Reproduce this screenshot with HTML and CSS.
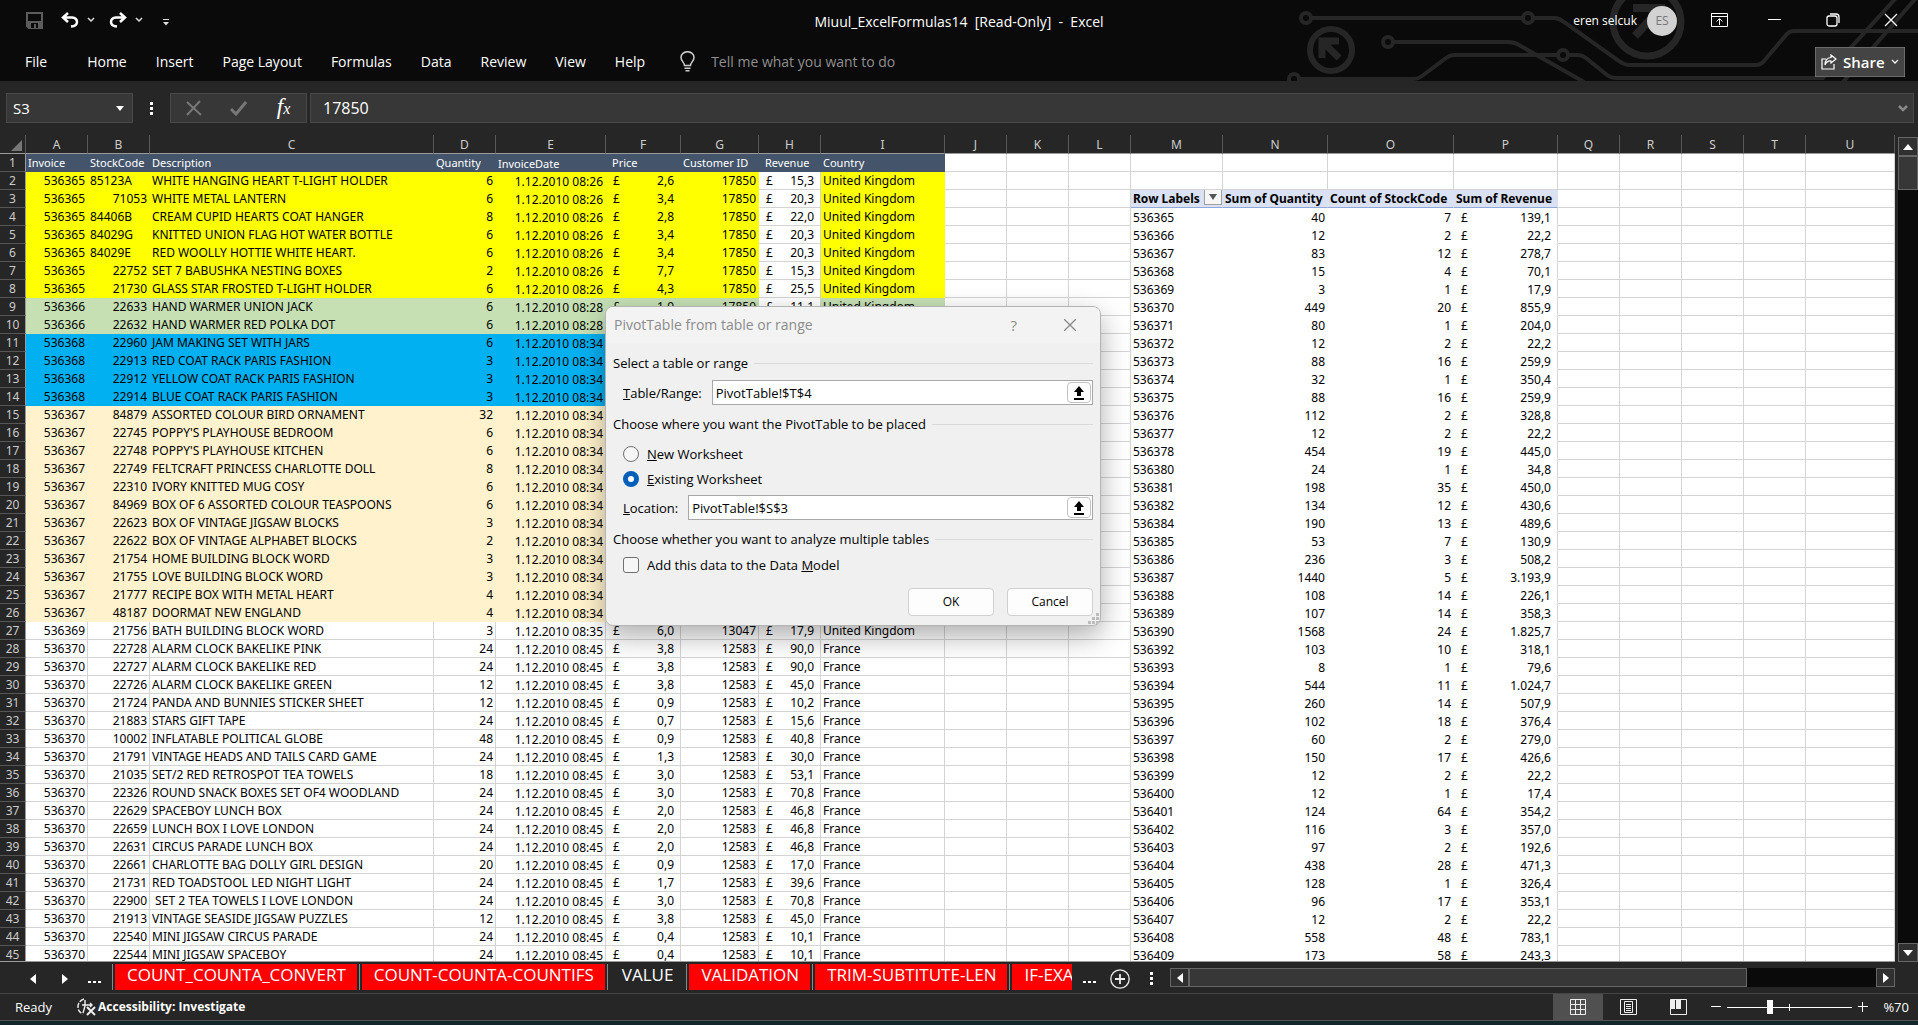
FILE: index.html
```html
<!DOCTYPE html>
<html lang="en">
<head>
<meta charset="utf-8">
<title>Miuul_ExcelFormulas14 - Excel</title>
<link rel="stylesheet" href="styles.css">
</head>
<body>
<div class="app">
  <header class="top">
    <svg class="circuit" viewBox="0 0 640 81" width="640" height="81" fill="none" stroke="#262626" stroke-width="4" aria-hidden="true">
      <circle cx="28" cy="18" r="5"/><path d="M33 18H245"/><circle cx="250" cy="18" r="5"/>
      <path d="M255 18H276Q281 18 286 22L341 61Q346 65 352 65H478Q483 65 486 61L508 35Q511 31 516 31H640"/>
      <circle cx="110" cy="42" r="5"/><path d="M115 42H230Q236 42 241 45L306 82"/>
      <circle cx="285" cy="55" r="5"/><path d="M280 55H176Q172 55 168 58L144 76Q140 79 136 79H21"/><circle cx="16" cy="79" r="5"/>
      <path d="M290 55H300Q304 55 308 58L329 75Q333 78 338 78H545L618 -2M565 82L638 -2"/>
      <circle cx="53" cy="50" r="21" stroke-width="6"/><path d="M61 41H44V58M45 42L61 58" stroke-width="7"/>
      <circle cx="369" cy="22" r="34" stroke-width="7"/><path d="M355 8H383V34M382 9L357 36" stroke-width="8"/>
    </svg>
    <div class="titlebar">
      <div class="quick">
        <button class="icon" aria-label="Save"><svg width="17" height="17" viewBox="0 0 17 17"><path d="M1 1H16V16H3L1 14Z" fill="none" stroke="#5c5c5c" stroke-width="2"/><path d="M2 9H15V15H2Z" fill="#5c5c5c"/><path d="M5 11H12V16H5Z" fill="#0a0a0a"/><path d="M8 12H10V16H8Z" fill="#5c5c5c"/></svg></button>
        <button class="icon undo" aria-label="Undo"><svg width="18" height="16" viewBox="0 0 18 16"><path d="M7 1L2 5.500L7 10M2.500 5.500H11Q16 6 16 10Q16 14 10 14.500" fill="none" stroke="#fff" stroke-width="2.500"/></svg></button>
        <button class="icon chev" aria-label="Undo list"><svg width="8" height="6" viewBox="0 0 8 6"><path d="M1 1L4 4L7 1" fill="none" stroke="#ddd" stroke-width="1.500"/></svg></button>
        <button class="icon redo" aria-label="Redo"><svg width="18" height="16" viewBox="0 0 18 16"><path d="M11 1L16 5.500L11 10M15.500 5.500H7Q2 6 2 10Q2 14 8 14.500" fill="none" stroke="#fff" stroke-width="2.500"/></svg></button>
        <button class="icon chev" aria-label="Redo list"><svg width="8" height="6" viewBox="0 0 8 6"><path d="M1 1L4 4L7 1" fill="none" stroke="#ddd" stroke-width="1.500"/></svg></button>
        <button class="icon custom" aria-label="Customize toolbar"><svg width="6" height="7" viewBox="0 0 6 7"><path d="M0 0H6V1H0ZM0 3H6L3 6.500Z" fill="#ddd"/></svg></button>
      </div>
      <h1 class="doc">Miuul_ExcelFormulas14&nbsp; [Read-Only]&nbsp; -&nbsp; Excel</h1>
      <div class="winctl">
        <span class="user">eren selcuk</span><span class="avatar">ES</span>
        <button class="icon w-ribbon" aria-label="Ribbon display"><svg width="17" height="14" viewBox="0 0 17 14" fill="none" stroke="#fff"><path d="M.5 .5H16.500V13.500H.5ZM.5 3.500H16.500M8.500 12V6M5.500 8.500L8.500 5.500L11.500 8.500"/></svg></button>
        <button class="icon" aria-label="Minimize"><svg width="14" height="14" viewBox="0 0 14 14"><path d="M0 6.500H13" stroke="#fff"/></svg></button>
        <button class="icon" aria-label="Restore"><svg width="14" height="14" viewBox="0 0 14 14" fill="none" stroke="#fff" stroke-width="1.300"><rect x="1" y="3" width="10" height="10" rx="2"/><path d="M4 1H10Q13 1 13 4V10"/></svg></button>
        <button class="icon" aria-label="Close"><svg width="14" height="14" viewBox="0 0 14 14"><path d="M1 1L13 13M13 1L1 13" stroke="#fff" stroke-width="1.300"/></svg></button>
      </div>
    </div>
    <div class="ribbon">
      <nav class="menu">
        <button class="file">File</button><button>Home</button><button>Insert</button><button>Page Layout</button><button>Formulas</button><button>Data</button><button>Review</button><button>View</button><button>Help</button>
      </nav>
      <label class="tell"><svg width="15" height="21" viewBox="0 0 15 21" fill="none" stroke="#ccc" stroke-width="1.500"><path d="M4.500 14.500C4.500 11.500 1 10 1 6.500A6.500 5.800 0 0 1 14 6.500C14 10 10.500 11.500 10.500 14.500ZM4.500 17.200H10.500M5.500 19.800H9.500"/></svg><input type="text" placeholder="Tell me what you want to do" aria-label="Tell me what you want to do"></label>
      <button class="share"><svg width="16" height="16" viewBox="0 0 16 16" fill="none" stroke="#fff" stroke-width="1.200"><path d="M5 5H1V15H13V10"/><path d="M10 1L15 5L10 9V7Q6 6.500 4 11Q4 4 10 3.500Z"/></svg>Share<svg width="8" height="6" viewBox="0 0 8 6"><path d="M1 1L4 4L7 1" fill="none" stroke="#fff" stroke-width="1.300"/></svg></button>
    </div>
  </header>

  <div class="formula">
    <div class="namebox"><input type="text" value="S3" aria-label="Name box"><svg width="8" height="5" viewBox="0 0 8 5"><path d="M0 0H8L4 5Z" fill="#fff"/></svg></div>
    <span class="dots"><i></i><i></i><i></i></span>
    <div class="fx">
      <button class="icon" aria-label="Cancel entry"><svg width="16" height="16" viewBox="0 0 16 16"><path d="M1 2L15 15M14 1L1 15" stroke="#777" stroke-width="2"/></svg></button>
      <button class="icon" aria-label="Enter"><svg width="17" height="15" viewBox="0 0 17 15"><path d="M1 8L6 13L16 1" fill="none" stroke="#777" stroke-width="3"/></svg></button>
      <button class="icon fn" aria-label="Insert function">f<small>x</small></button>
    </div>
    <div class="value"><input type="text" value="17850" aria-label="Formula bar"><svg width="10" height="7" viewBox="0 0 10 7"><path d="M1 1L5 5L9 1" fill="none" stroke="#888" stroke-width="2.500"/></svg></div>
  </div>

  <main class="work">
    <div class="sheet"><table id="grid"></table></div>
    <div class="vscroll"><button aria-label="Scroll up"><svg width="10" height="6" viewBox="0 0 10 6"><path d="M0 6L5 0L10 6Z" fill="#fff"/></svg></button><span class="vthumb"></span><button class="down" aria-label="Scroll down"><svg width="10" height="6" viewBox="0 0 10 6"><path d="M0 0L5 6L10 0Z" fill="#fff"/></svg></button></div>
  </main>

  <div class="tabs">
    <div class="tabnav">
      <button class="icon" aria-label="Previous sheet"><svg width="6" height="10" viewBox="0 0 6 10"><path d="M6 0V10L0 5Z" fill="#fff"/></svg></button>
      <button class="icon" aria-label="Next sheet"><svg width="6" height="10" viewBox="0 0 6 10"><path d="M0 0V10L6 5Z" fill="#fff"/></svg></button>
      <button class="icon more" aria-label="More sheets"><i></i><i></i><i></i></button>
    </div>
    <div class="tablist">
      <button class="red">COUNT_COUNTA_CONVERT</button><button class="red">COUNT-COUNTA-COUNTIFS</button><button>VALUE</button><button class="red">VALIDATION</button><button class="red">TRIM-SUBTITUTE-LEN</button><button class="red cut">IF-EXAMPLES</button>
    </div>
    <button class="icon more" aria-label="More sheets"><i></i><i></i><i></i></button>
    <button class="icon add" aria-label="New sheet"><svg width="20" height="20" viewBox="0 0 20 20" fill="none" stroke="#eee"><circle cx="10" cy="10" r="9.200" stroke-width="1.300"/><path d="M10 5V15M5 10H15" stroke-width="1.800"/></svg></button>
    <span class="dots"><i></i><i></i><i></i></span>
    <div class="hscroll"><button aria-label="Scroll left"><svg width="6" height="10" viewBox="0 0 6 10"><path d="M6 0V10L0 5Z" fill="#fff"/></svg></button><span class="hthumb"></span><span class="htrack"></span><button aria-label="Scroll right"><svg width="6" height="10" viewBox="0 0 6 10"><path d="M0 0V10L6 5Z" fill="#fff"/></svg></button></div>
  </div>

  <footer class="status">
    <span>Ready</span>
    <button class="acc-check"><svg width="19" height="18" viewBox="0 0 19 18" fill="none" stroke="#eee" stroke-width="1.400"><path d="M7 1Q1 3 1 9Q1 14 6 16" stroke-dasharray="5 1.500"/><path d="M8 2V8M5 7H15M13 5L15 7L13 9M8 8L6 15"/><path d="M10 9L18 17M18 9L10 17" stroke-width="2"/></svg>Accessibility: Investigate</button>
    <div class="views">
      <button class="on" aria-label="Normal view"><svg width="16" height="16" viewBox="0 0 16 16" fill="none" stroke="#eee"><path d="M.5 .5H15.500V15.500H.5ZM5.500 0V16M10.500 0V16M0 5.500H16M0 10.500H16"/></svg></button>
      <button aria-label="Page layout view"><svg width="17" height="16" viewBox="0 0 17 16" fill="none" stroke="#eee"><path d="M.5 .5H16.500V15.500H.5ZM4.500 2.500H12.500V13.500H4.500ZM6 5.500H11M6 7.500H11M6 9.500H11M6 11.500H11"/></svg></button>
      <button aria-label="Page break view"><svg width="17" height="16" viewBox="0 0 17 16" fill="none" stroke="#eee"><path d="M.5 .5H16.500V15.500H.5Z"/><path d="M1 1H5V10H1ZM6 1H11V10H6Z" fill="#eee" stroke="none"/></svg></button>
    </div>
    <button class="icon" aria-label="Zoom out"><svg width="10" height="10" viewBox="0 0 10 10"><path d="M0 4.500H10" stroke="#fff"/></svg></button>
    <span class="zoom"><input type="range" min="0" max="100" value="34" aria-label="Zoom"></span>
    <button class="icon" aria-label="Zoom in"><svg width="10" height="10" viewBox="0 0 10 10"><path d="M0 4.500H10M4.500 0V10" stroke="#fff"/></svg></button>
    <span class="pct">%70</span>
  </footer>
  <div class="strip"></div>
</div>

<section class="dialog" role="dialog" aria-labelledby="dlg">
  <header class="dtitle"><h2 id="dlg">PivotTable from table or range</h2><button class="icon help" aria-label="Help">?</button><button class="icon" aria-label="Close dialog"><svg width="12" height="12" viewBox="0 0 12 12"><path d="M0 0L12 12M12 0L0 12" stroke="#888" stroke-width="1.300"/></svg></button></header>
  <form class="dbody">
    <h3>Select a table or range</h3>
    <div class="field"><label for="rng"><u>T</u>able/Range:</label><span class="ref"><input id="rng" type="text" value="PivotTable!$T$4"><button type="button" aria-label="Pick range"><svg width="10" height="14" viewBox="0 0 10 14"><path d="M5 0L10 6H7V10H3V6H0ZM0 12H10V14H0Z"/></svg></button></span></div>
    <h3>Choose where you want the PivotTable to be placed</h3>
    <label class="opt first"><input type="radio" name="place"><span><u>N</u>ew Worksheet</span></label>
    <label class="opt"><input type="radio" name="place" checked><span><u>E</u>xisting Worksheet</span></label>
    <div class="field loc"><label for="loc"><u>L</u>ocation:</label><span class="ref"><input id="loc" type="text" value="PivotTable!$S$3"><button type="button" aria-label="Pick location"><svg width="10" height="14" viewBox="0 0 10 14"><path d="M5 0L10 6H7V10H3V6H0ZM0 12H10V14H0Z"/></svg></button></span></div>
    <h3>Choose whether you want to analyze multiple tables</h3>
    <label class="opt check"><input type="checkbox"><span>Add this data to the Data <u>M</u>odel</span></label>
    <div class="actions"><button type="button">OK</button><button type="button">Cancel</button></div>
  </form>
  <svg class="grip" width="11" height="11" viewBox="0 0 11 11" fill="#bdbdbd"><path d="M8 0H11V3H8ZM4 4H7V7H4ZM8 4H11V7H8ZM0 8H3V11H0ZM4 8H7V11H4ZM8 8H11V11H8Z"/></svg>
</section>
<script src="app.js"></script>
</body>
</html>
```
FILE: styles.css
```css
*{box-sizing:border-box}
body{margin:0;background:#262626;color:#fff;font:14px/20px "Open Sans","Noto Sans",sans-serif;overflow:hidden}
button,input{font:inherit;color:inherit;margin:0;padding:0;border:0;background:none;outline:0}
svg{display:block;flex:none}
h1,h2,h3{margin:0;font-weight:400}
.icon{display:flex;align-items:center;justify-content:center}
.app{display:flex;flex-direction:column;height:100vh}

.top{position:relative;background:#0a0a0a;height:81px;flex:none;display:flex;flex-direction:column}
.circuit{position:absolute;right:0;top:0}
.titlebar,.ribbon{position:relative;display:flex;align-items:center}
.titlebar{height:40px;display:grid;grid-template-columns:1fr auto 1fr}
.quick{display:flex;align-items:center;padding-left:26px}
.undo{margin-left:18px}
.redo{margin-left:14px}
.chev{margin-left:8px}
.custom{margin:4px 0 0 20px}
.doc{font-size:14px;padding-top:4px}
.winctl{display:flex;align-items:center;justify-content:flex-end;gap:44px;padding-right:20px}
.user{font-size:12px;padding-top:2px;margin-right:-34px}
.avatar{width:30px;height:30px;border-radius:50%;background:#d2d2d2;color:#777;font-size:12px;line-height:30px;text-align:center;margin:2px -10px 0 0}
.winctl .icon{height:14px;width:14px}
.winctl .w-ribbon{width:17px;margin-right:-4px}
.ribbon{height:41px;padding:2px 13px 0 11px}
.menu{display:flex}
.menu button{padding:0 15px 0 14px}
.menu .file{margin-right:11px}
.tell{display:flex;align-items:center;gap:16px;margin-left:20px;flex:1}
.tell input{width:240px}
.tell input::placeholder{color:#8f8f8f;opacity:1}
.share{display:flex;align-items:center;gap:6px;width:90px;height:30px;padding-left:5px;background:#444;border:1px solid #6a6a6a;font-weight:600;font-size:15px}

.formula{display:flex;height:54px;padding:12px 4px 12px 6px;flex:none;font-size:16px}
.namebox,.fx,.value{display:flex;align-items:center;background:#373737;border:1px solid #484848;height:30px}
.namebox{width:127px;padding:0 8px 0 6px}
.namebox input,.value input{flex:1;min-width:0}
.namebox input{font-size:15px}
.dots{display:flex;flex-direction:column;justify-content:center;gap:2px}
.dots i,.more i{width:3px;height:3px;background:#fff}
.formula .dots{width:37px;align-items:center}
.fx{width:137px;display:grid;grid-template-columns:1fr 1fr 1fr;justify-items:center}
.fn{font:italic 23px/26px "Liberation Serif",serif;-webkit-text-stroke:0;align-items:baseline}
.fn small{font-size:16px}
.value{flex:1;margin-left:3px;padding:0 5px 0 12px}

.work{flex:1;min-height:0;display:flex;gap:3px}
.sheet{flex:1;overflow:hidden;border-bottom:1px solid #9a9a9a}
table{table-layout:fixed;width:100%;border-collapse:separate;border-spacing:0;background:#fff;color:#000;font:12px/17px "Noto Sans",sans-serif}
th,td{height:18px;padding:0 2px;overflow:hidden;white-space:pre;text-align:left}
th{background:#262626;color:#ccc;font-weight:400;text-align:center;padding:0}
thead th{height:19px;line-height:16px;padding-top:2px;border-bottom:1px solid #9a9a9a;border-right:1px solid #585858}
tbody th{border-bottom:1px solid #555;border-right:1px solid #9a9a9a}
.corner svg{margin-left:11px}
td{border-right:1px solid #d4d4d4;border-bottom:1px solid #d4d4d4}
.num{text-align:right}
.money{padding:0 6px}
.money span{display:flex;justify-content:space-between;padding-left:1px}
.money span span{padding:0}
.low{line-height:15px;padding-top:2px}
.head{background:#44546a;border-color:#44546a;color:#fff;font-size:11px}
.yellow{background:#ff0;border-color:#ff0}
.green{background:#c6e0b4;border-color:#c6e0b4}
.blue{background:#00b0f0;border-color:#00b0f0}
.cream{background:#fff2cc;border-color:#fff2cc}
.pivot{border-color:#fff}
.pivot.edge{border-right-color:#d4d4d4}
.phead{background:#d9e1f2;border-color:#d9e1f2;border-bottom-color:#8ea9db;font-weight:700}
.filter{float:right;width:18px;height:17px;margin:-2px -2px 0 0;border:1px solid #a0a0a0;background:#f6f6f6;display:flex;align-items:center;justify-content:center}

.vscroll{width:20px;display:flex;flex-direction:column;padding-top:2px;background:#0a0a0a;box-shadow:inset 0 2px #262626}
.vscroll button,.hscroll button{display:flex;align-items:center;justify-content:center;background:#303030;border:1px solid #666;flex:none}
.vscroll button{height:19px}
.vthumb{height:34px;background:#373737;border:1px solid #666}
.vscroll .down{margin-top:auto}

.tabs{height:32px;flex:none;display:flex;align-items:flex-start;padding:2px 23px 0 0;border-bottom:1px solid #454545}
.tabnav{display:flex;align-items:center;gap:26px;height:30px;padding:0 12px 0 30px}
.tabnav .more{margin-left:-6px}
.more{gap:3px;height:30px}
.tabs .more i{width:2px;height:2px;margin-top:6px;box-shadow:1px 0 #fff}
.tablist{display:flex;width:960px}
.tablist button{border-left:1px solid #888;padding:0 11px 4px 14px;font-size:17px;line-height:22px;height:26px;margin-right:2px;white-space:nowrap;box-shadow:inset 2px 0 #262626}
.tablist .red{background:#f00}
.tablist .cut{flex:1;min-width:0;overflow:hidden;margin-right:0;text-align:left}
.tabs>.more{margin-left:11px}
.add{margin:5px 0 0 15px}
.tabs .dots{height:28px;margin:0 17px 0 20px}
.hscroll{flex:1;display:flex;height:19px;margin-top:4px}
.hscroll button{width:19px}
.hthumb{flex:558;background:#373737;border:1px solid #666}
.htrack{flex:129;background:#0a0a0a}

.status{height:27px;flex:none;display:flex;align-items:center;padding:0 9px 0 15px;border-bottom:1px solid #555;font-size:13px}
.acc-check{display:flex;align-items:center;gap:2px;margin-left:25px;font-size:12px;font-weight:700}
.views{display:flex;margin-left:auto;margin-right:8px;height:26px}
.views button{width:50px;display:flex;align-items:center;justify-content:center}
.views .on{background:#505050}
.zoom{width:125px;margin:0 6px;display:flex;background:linear-gradient(#fff,#fff) 62px 50%/1px 7px no-repeat}
.zoom input{appearance:none;width:125px;height:14px;background:linear-gradient(#fff,#fff) 0 50%/100% 1px no-repeat}
.zoom input::-webkit-slider-thumb{appearance:none;width:6px;height:14px;background:#fff}
.pct{min-width:41px;text-align:right;flex:none}
.strip{height:4px;flex:none;background:#12262c}

.dialog{position:absolute;left:605px;top:306px;width:496px;background:#f0f0f0;color:#000;border:1px solid #b4b4b4;border-radius:8px;box-shadow:0 10px 28px rgba(0,0,0,.32);font-size:13px;line-height:18px;overflow:hidden}
.dtitle{height:36px;background:#f3f3f3;display:flex;align-items:center;padding:0 24px 0 8px;color:#8c8c8c}
.dtitle h2{font-size:14px;margin-right:auto}
.help{font-size:15px;margin-right:47px}
.dbody{padding:11px 7px 9px}
.dbody h3{font-size:13px;display:flex;align-items:center;gap:6px}
.dbody h3::after{content:"";flex:1;height:1px;background:#dadada}
.field{display:flex;align-items:center;gap:10px;margin:8px 0 10px;padding-left:10px}
.field.loc{margin-top:7px}
.ref{flex:1;display:flex;height:25px;padding:1px 1px 1px 3px;border:1px solid #a8a8a8;background:#fff}
.ref input{flex:1;min-width:0}
.ref button{width:24px;border:1px solid #c4c4c4;border-radius:4px;background:#fdfdfd;display:flex;align-items:center;justify-content:center}
.opt{display:flex;align-items:center;gap:8px;padding-left:10px;margin-top:7px}
.opt.first{margin-top:12px}
.opt.check{margin-top:8px}
.opt input{appearance:none;width:16px;height:16px;border:1px solid #707070;border-radius:50%;background:#f6f6f6}
.opt input:checked{border:5px solid #005fb8;background:#fff}
.opt.check input{border-radius:3px}
.actions{display:flex;justify-content:flex-end;gap:13px;margin-top:14px;font-size:12px}
.actions button{width:86px;height:28px;border:1px solid #d0d0d0;border-radius:4px;background:#fdfdfd}
.grip{position:absolute;right:1px;bottom:1px}
```
FILE: app.js
```js
const widths = [26, 62, 62, 284, 62, 110, 75, 78, 62, 124, 62, 62, 62, 92, 105, 126, 104, 62, 62, 62, 62];
const letters = [..."ABCDEFGHIJKLMNOPQRSTU"];

// invoice | stock code | description | quantity | time | price | customer | revenue | country
const UK = "United Kingdom";
const orders = `536365|85123A|WHITE HANGING HEART T-LIGHT HOLDER|6|08:26|2,6|17850|15,3|${UK}
536365|71053|WHITE METAL LANTERN|6|08:26|3,4|17850|20,3|${UK}
536365|84406B|CREAM CUPID HEARTS COAT HANGER|8|08:26|2,8|17850|22,0|${UK}
536365|84029G|KNITTED UNION FLAG HOT WATER BOTTLE|6|08:26|3,4|17850|20,3|${UK}
536365|84029E|RED WOOLLY HOTTIE WHITE HEART.|6|08:26|3,4|17850|20,3|${UK}
536365|22752|SET 7 BABUSHKA NESTING BOXES|2|08:26|7,7|17850|15,3|${UK}
536365|21730|GLASS STAR FROSTED T-LIGHT HOLDER|6|08:26|4,3|17850|25,5|${UK}
536366|22633|HAND WARMER UNION JACK|6|08:28|1,9|17850|11,1|${UK}
536366|22632|HAND WARMER RED POLKA DOT|6|08:28
536368|22960|JAM MAKING SET WITH JARS|6|08:34
536368|22913|RED COAT RACK PARIS FASHION|3|08:34
536368|22912|YELLOW COAT RACK PARIS FASHION|3|08:34
536368|22914|BLUE COAT RACK PARIS FASHION|3|08:34
536367|84879|ASSORTED COLOUR BIRD ORNAMENT|32|08:34
536367|22745|POPPY'S PLAYHOUSE BEDROOM|6|08:34
536367|22748|POPPY'S PLAYHOUSE KITCHEN|6|08:34
536367|22749|FELTCRAFT PRINCESS CHARLOTTE DOLL|8|08:34
536367|22310|IVORY KNITTED MUG COSY|6|08:34
536367|84969|BOX OF 6 ASSORTED COLOUR TEASPOONS|6|08:34
536367|22623|BOX OF VINTAGE JIGSAW BLOCKS|3|08:34
536367|22622|BOX OF VINTAGE ALPHABET BLOCKS|2|08:34
536367|21754|HOME BUILDING BLOCK WORD|3|08:34
536367|21755|LOVE BUILDING BLOCK WORD|3|08:34
536367|21777|RECIPE BOX WITH METAL HEART|4|08:34
536367|48187|DOORMAT NEW ENGLAND|4|08:34
536369|21756|BATH BUILDING BLOCK WORD|3|08:35|6,0|13047|17,9|${UK}
536370|22728|ALARM CLOCK BAKELIKE PINK|24|08:45|3,8|12583|90,0|France
536370|22727|ALARM CLOCK BAKELIKE RED|24|08:45|3,8|12583|90,0|France
536370|22726|ALARM CLOCK BAKELIKE GREEN|12|08:45|3,8|12583|45,0|France
536370|21724|PANDA AND BUNNIES STICKER SHEET|12|08:45|0,9|12583|10,2|France
536370|21883|STARS GIFT TAPE|24|08:45|0,7|12583|15,6|France
536370|10002|INFLATABLE POLITICAL GLOBE|48|08:45|0,9|12583|40,8|France
536370|21791|VINTAGE HEADS AND TAILS CARD GAME|24|08:45|1,3|12583|30,0|France
536370|21035|SET/2 RED RETROSPOT TEA TOWELS|18|08:45|3,0|12583|53,1|France
536370|22326|ROUND SNACK BOXES SET OF4 WOODLAND|24|08:45|3,0|12583|70,8|France
536370|22629|SPACEBOY LUNCH BOX|24|08:45|2,0|12583|46,8|France
536370|22659|LUNCH BOX I LOVE LONDON|24|08:45|2,0|12583|46,8|France
536370|22631|CIRCUS PARADE LUNCH BOX|24|08:45|2,0|12583|46,8|France
536370|22661|CHARLOTTE BAG DOLLY GIRL DESIGN|20|08:45|0,9|12583|17,0|France
536370|21731|RED TOADSTOOL LED NIGHT LIGHT|24|08:45|1,7|12583|39,6|France
536370|22900| SET 2 TEA TOWELS I LOVE LONDON|24|08:45|3,0|12583|70,8|France
536370|21913|VINTAGE SEASIDE JIGSAW PUZZLES|12|08:45|3,8|12583|45,0|France
536370|22540|MINI JIGSAW CIRCUS PARADE|24|08:45|0,4|12583|10,1|France
536370|22544|MINI JIGSAW SPACEBOY|24|08:45|0,4|12583|10,1|France`.split("\n").map(r => r.split("|"));

// row label, sum of quantity, count of stock code, sum of revenue
const pivot = `536365 40 7 139,1
536366 12 2 22,2
536367 83 12 278,7
536368 15 4 70,1
536369 3 1 17,9
536370 449 20 855,9
536371 80 1 204,0
536372 12 2 22,2
536373 88 16 259,9
536374 32 1 350,4
536375 88 16 259,9
536376 112 2 328,8
536377 12 2 22,2
536378 454 19 445,0
536380 24 1 34,8
536381 198 35 450,0
536382 134 12 430,6
536384 190 13 489,6
536385 53 7 130,9
536386 236 3 508,2
536387 1440 5 3.193,9
536388 108 14 226,1
536389 107 14 358,3
536390 1568 24 1.825,7
536392 103 10 318,1
536393 8 1 79,6
536394 544 11 1.024,7
536395 260 14 507,9
536396 102 18 376,4
536397 60 2 279,0
536398 150 17 426,6
536399 12 2 22,2
536400 12 1 17,4
536401 124 64 354,2
536402 116 3 357,0
536403 97 2 192,6
536404 438 28 471,3
536405 128 1 326,4
536406 96 17 353,1
536407 12 2 22,2
536408 558 48 783,1
536409 173 58 243,3`.split("\n").map(r => r.split(" "));

const td = (cls, text = "") => `<td class="${cls}">${text}</td>`;
const money = (cls, v) => td(cls + " money", v ? `<span><span>£</span><span>${v}</span></span>` : "");
const fillOf = n => n <= 8 ? "yellow" : n <= 10 ? "green" : n <= 14 ? "blue" : n <= 26 ? "cream" : "";

let html = "<colgroup>" + widths.map(w => `<col style="width:${w}px">`).join("") + "<col></colgroup>";
html += `<thead><tr><th class="corner"><svg width="11" height="11" viewBox="0 0 11 11"><path d="M11 0V11H0Z" fill="#777"/></svg></th>` +
  letters.map(l => `<th>${l}</th>`).join("") + "</tr></thead><tbody>";

for (let n = 1; n <= 45; n++) {
  html += `<tr><th>${n}</th>`;
  if (n === 1) {
    const names = ["Invoice", "StockCode", "Description", "Quantity", "InvoiceDate", "Price", "Customer ID", "Revenue", "Country"];
    html += names.map((h, i) => td("head" + (i === 5 || i === 7 ? " money" : i === 4 ? " low" : ""), h)).join("");
  } else {
    const [inv, code, desc, qty, time, price, cust, rev, country] = orders[n - 2];
    const f = fillOf(n);
    html += td(f + " num", inv) + td(f + (/\D/.test(code) ? "" : " num"), code) + td(f, desc) + td(f + " num", qty) +
      td(f + " num low", "1.12.2010 " + time) + money(f, price) + td(f + " num", cust) + money("", rev) + td(f, country);
  }
  html += td("") + td("") + td("");
  if (n < 3) html += td("") + td("") + td("") + td("");
  else if (n === 3) {
    html += td("phead", `<button class="filter" aria-label="Filter row labels"><svg width="8" height="6" viewBox="0 0 8 6"><path d="M0 0H8L4 6Z" fill="#555"/></svg></button>Row Labels`) +
      ["Sum of Quantity", "Count of StockCode", "Sum of Revenue"].map(t => td("phead", t)).join("");
  } else {
    const [label, q, c, r] = pivot[n - 4];
    html += td("pivot low", label) + td("pivot num low", q) + td("pivot num low", c) + money("pivot edge low", r);
  }
  html += td("").repeat(5) + "</tr>";
}
document.getElementById("grid").innerHTML = html + "</tbody>";
```
